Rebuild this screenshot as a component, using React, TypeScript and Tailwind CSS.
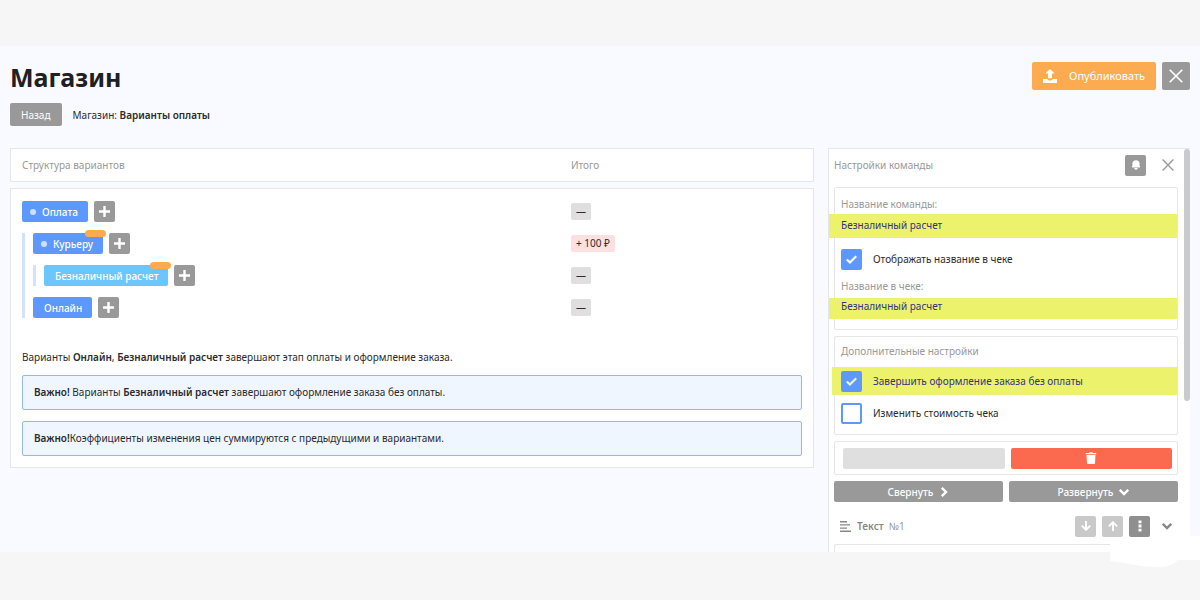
import React from "react";
import { HiBell } from "react-icons/hi";

type Variant = {
  name: string;
  color: string;
  dot?: boolean;
  marked?: boolean;
  children?: Variant[];
};

const variants: Variant[] = [
  { name: "Курьеру", color: "bg-[#5c98fd]", dot: true, marked: true, children: [
    { name: "Безналичный расчет", color: "bg-[#6dc5fe]", marked: true },
  ] },
  { name: "Онлайн", color: "bg-[#5c98fd]" },
];

const totals = ["—", "+ 100 ₽", "—", "—"];

function classNames(...classes: (string | false | undefined)[]) {
  return classes.filter(Boolean).join(" ");
}

const CloseIcon = ({ className }: { className: string }) => (
  <svg viewBox="0 0 14 14" className={className} fill="none" stroke="currentColor" strokeWidth="1.6" aria-hidden="true">
    <path d="M.7.7 13.3 13.3M13.3.7.7 13.3" />
  </svg>
);

const UploadIcon = () => (
  <svg viewBox="0 0 14 14" className="h-3.5 w-3.5" fill="currentColor" aria-hidden="true">
    <path d="M7 0 11.6 4.6H8.9V9.3H5.1V4.6H2.4Z" />
    <path d="M0 10h4.2c.3.9 1.4 1.5 2.8 1.5S9.5 10.9 9.8 10H14v4H0Z" />
  </svg>
);

const TrashIcon = () => (
  <svg viewBox="0 0 12 12" className="h-3 w-3" fill="currentColor" aria-hidden="true">
    <path d="M.8 1H4l.6-.8h2.8l.6.8h3.200v1.200H.8Z" />
    <path d="M1.500 3h9l-.5 8.200c0 .5-.4.8-.8.8H2.800c-.4 0-.8-.3-.8-.8Z" />
  </svg>
);

const ChevronIcon = ({ className }: { className?: string }) => (
  <svg viewBox="0 0 10 10" className={classNames("h-2.5 w-2.5", className)} fill="none" stroke="currentColor" strokeWidth="2.4" aria-hidden="true">
    <path d="M.8 2.800 5 7 9.200 2.800" />
  </svg>
);

const ArrowIcon = ({ className }: { className?: string }) => (
  <svg viewBox="0 0 10 10" className={classNames("h-2.5 w-2.5", className)} fill="none" stroke="currentColor" strokeWidth="1.9" aria-hidden="true">
    <path d="M5 0V9M.8 4.600 5 8.800 9.200 4.600" />
  </svg>
);

const DotsIcon = () => (
  <svg viewBox="0 0 4 12" className="h-3 w-1" fill="currentColor" aria-hidden="true">
    <path d="M.5.5h3v2.800h-3ZM.5 4.600h3v2.800h-3ZM.5 8.700h3v2.800h-3Z" />
  </svg>
);

const LinesIcon = () => (
  <svg viewBox="0 0 11 11" className="h-[11px] w-[11px]" fill="#888" aria-hidden="true">
    <path d="M0 0h7v1.400H0ZM0 3.200h10v1.400H0ZM0 6.400h7v1.400H0ZM0 9.600h11V11H0Z" />
  </svg>
);

const AddButton = () => (
  <button type="button" aria-label="Добавить" className="flex h-[21px] w-[21px] items-center justify-center rounded-xs bg-[#999] text-white">
    <svg viewBox="0 0 11 11" className="h-[11px] w-[11px]" fill="currentColor" aria-hidden="true">
      <path d="M4.300 0h2.400v4.300H11v2.400H6.700V11H4.300V6.700H0V4.300h4.300Z" />
    </svg>
  </button>
);

const VariantRow = ({ variant }: { variant: Variant }) => (
  <div className="flex gap-1.5">
    <button
      type="button"
      className={classNames(
        "relative flex h-[21px] items-center rounded-xs pr-2.5 font-medium text-white",
        variant.dot ? "gap-1.5 pl-2" : "pl-[11px]",
        variant.color
      )}
    >
      {variant.dot && <span className="h-1.5 w-1.5 rounded-full bg-[#cfe0ff]" />}
      {variant.name}
      {variant.marked && <span className="absolute -top-[3px] -right-[3px] h-[7px] w-[21px] rounded-full bg-[#fdab51]" />}
    </button>
    <AddButton />
  </div>
);

const VariantTree = ({ items }: { items: Variant[] }) => (
  <ul className="flex flex-col gap-[11px] border-l-[3px] border-[#d2e1fc] pl-2">
    {items.map((item) => (
      <li key={item.name} className="flex flex-col gap-[11px]">
        <VariantRow variant={item} />
        {item.children && <VariantTree items={item.children} />}
      </li>
    ))}
  </ul>
);

const Checkbox = ({ label, checked, highlighted }: { label: string; checked?: boolean; highlighted?: boolean }) => (
  <label
    className={classNames(
      "flex items-center gap-[11px]",
      highlighted ? "-mr-1.5 -ml-[9px] h-7 bg-[#edf26d] pl-[9px] text-[#33337f]" : "h-[22px]"
    )}
  >
    <span className="relative h-[21px] w-[21px]">
      <input
        type="checkbox"
        defaultChecked={checked}
        className="peer block h-full w-full appearance-none rounded-xs border-2 border-[#5c98fd] bg-white checked:bg-[#5c98fd]"
      />
      <svg viewBox="0 0 12 9" className="pointer-events-none absolute top-1.5 left-[5px] hidden h-[9px] w-[11px] peer-checked:block" fill="none" stroke={highlighted ? "#edf5c0" : "#fff"} strokeWidth="2.4" aria-hidden="true">
        <path d="M.8 4.500 4.300 7.700 11.200.9" />
      </svg>
    </span>
    {label}
  </label>
);

const Structure = () => (
  <section className="flex min-w-0 flex-[804] flex-col gap-1.5">
    <div className="grid h-[34px] grid-cols-[549fr_231fr] items-center border border-[#e3e6ec] bg-white px-[11px] text-[#999]">
      <h2>Структура вариантов</h2>
      <h2>Итого</h2>
    </div>
    <div className="border border-[#e3e6ec] bg-white px-[11px] pt-3 pb-[11px]">
      <div className="grid grid-cols-[549fr_231fr]">
        <div className="flex flex-col gap-[11px]">
          <VariantRow variant={{ name: "Оплата", color: "bg-[#5c98fd]", dot: true }} />
          <VariantTree items={variants} />
        </div>
        <ul className="flex flex-col gap-[11px]">
          {totals.map((total, i) => (
            <li key={i} className="flex h-[21px] items-center">
              <span className={classNames("h-[17px] rounded-xs px-[5px] leading-4", total === "—" ? "bg-[#dfdfdf]" : "bg-[#fee0e0]")}>
                {total}
              </span>
            </li>
          ))}
        </ul>
      </div>
      <p className="mt-[31px] mb-2.5">
        Варианты <b className="font-semibold">Онлайн</b>, <b className="font-semibold">Безналичный расчет</b> завершают этап оплаты и оформление заказа.
      </p>
      <div className="flex flex-col gap-[11px]">
        <p className="h-[35px] rounded-xs border border-[#94b7ee] bg-[#f0f6ff] px-[11px] py-2">
          <b className="font-semibold">Важно!</b> Варианты <b className="font-semibold">Безналичный расчет</b> завершают оформление заказа без оплаты.
        </p>
        <p className="h-[35px] rounded-xs border border-[#94b7ee] bg-[#f0f6ff] px-[11px] py-2">
          <b className="font-semibold">Важно!</b>Коэффициенты изменения цен суммируются с предыдущими и вариантами.
        </p>
      </div>
    </div>
  </section>
);

const Settings = () => (
  <aside className="flex min-w-0 flex-1 overflow-hidden border-t border-l border-[#e3e6ec] bg-white">
    <div className="flex min-w-0 flex-1 flex-col gap-1.5 pr-1.5 pl-[5px]">
      <header className="flex h-8 shrink-0 items-center text-[#999]">
        <h2 className="flex-1">Настройки команды</h2>
        <button type="button" aria-label="Уведомления" className="mr-4 flex h-[21px] w-[21px] items-center justify-center rounded-xs bg-[#999] text-white">
          <HiBell className="h-3 w-3" />
        </button>
        <button type="button" aria-label="Закрыть настройки" className="mr-1">
          <CloseIcon className="h-3 w-3" />
        </button>
      </header>
      <div className="h-[143px] shrink-0 rounded-xs border border-[#e6e6e6] px-1.5 pt-2">
        <label htmlFor="command-name" className="block h-[18px] text-[#999]">Название команды:</label>
        <div className="-mr-1.5 -ml-3 flex h-6 bg-[#edf26d] pl-3">
          <input id="command-name" defaultValue="Безналичный расчет" className="h-[22px] w-full text-[#33337f] outline-none" />
        </div>
        <div className="mt-2.5">
          <Checkbox label="Отображать название в чеке" checked />
        </div>
        <label htmlFor="receipt-name" className="mt-2 block h-5 text-[#999]">Название в чеке:</label>
        <div className="-mr-1.5 -ml-3 flex h-[21px] bg-[#edf26d] pl-3">
          <input id="receipt-name" defaultValue="Безналичный расчет" className="h-4 w-full text-[#33337f] outline-none" />
        </div>
      </div>
      <div className="h-[99px] shrink-0 rounded-xs border border-[#e6e6e6] px-1.5 pt-1.5">
        <h3 className="h-6 text-[#999]">Дополнительные настройки</h3>
        <Checkbox label="Завершить оформление заказа без оплаты" checked highlighted />
        <div className="mt-[7px]">
          <Checkbox label="Изменить стоимость чека" />
        </div>
      </div>
      <div className="flex h-[34px] shrink-0 items-center gap-1.5 rounded-xs border border-[#e6e6e6] pr-[5px] pl-2">
        <button type="button" aria-label="Сохранить" disabled className="h-[21px] flex-1 rounded-xs bg-[#dfdfdf]" />
        <button type="button" aria-label="Удалить" className="flex h-[21px] flex-1 items-center justify-center rounded-xs bg-[#fb6a4f] text-white">
          <TrashIcon />
        </button>
      </div>
      <div className="flex shrink-0 gap-1.5 font-medium text-white">
        <button type="button" className="flex h-[21px] flex-1 items-center justify-center gap-1.5 rounded-xs bg-[#999]">
          Свернуть <ChevronIcon className="-rotate-90" />
        </button>
        <button type="button" className="flex h-[21px] flex-1 items-center justify-center gap-1.5 rounded-xs bg-[#999]">
          Развернуть <ChevronIcon />
        </button>
      </div>
      <div className="flex h-[30px] shrink-0 items-center gap-1.5 pt-1.5 pr-1.5 pl-1.5 text-[#999]">
        <LinesIcon />
        <p className="flex-1">
          <b className="font-semibold text-[#888]">Текст</b>&nbsp; №1
        </p>
        <button type="button" aria-label="Вниз" className="flex h-[21px] w-[21px] items-center justify-center rounded-xs bg-[#c9c9c9] text-white">
          <ArrowIcon />
        </button>
        <button type="button" aria-label="Вверх" className="flex h-[21px] w-[21px] items-center justify-center rounded-xs bg-[#c9c9c9] text-white">
          <ArrowIcon className="rotate-180" />
        </button>
        <button type="button" aria-label="Меню" className="flex h-[21px] w-[21px] items-center justify-center rounded-xs bg-[#8f8f8f] text-white">
          <DotsIcon />
        </button>
        <button type="button" aria-label="Раскрыть" className="ml-1.5 text-[#888]">
          <ChevronIcon />
        </button>
      </div>
      <div className="h-8 shrink-0 rounded-xs border border-[#e6e6e6]" />
    </div>
    <div className="w-1.5 bg-white">
      <div className="h-[252px] rounded-full bg-[#c9cacd]" />
    </div>
  </aside>
);

export default function App() {
  return (
    <div className="relative flex h-screen flex-col overflow-hidden bg-[#f6f6f6] pt-[46px] pb-12 font-['Noto_Sans','Open_Sans',sans-serif] text-[10px] leading-4 text-[#2b2b2b]">
      <main className="flex min-h-0 flex-1 flex-col bg-[#f9faff] px-2.5">
        <header className="flex items-start gap-1.5 pt-4">
          <h1 className="flex-1 text-[25px] leading-[30px] font-bold text-[#1f2021]">Магазин</h1>
          <button type="button" className="flex h-7 items-center gap-3 rounded-xs bg-[#fdab51] px-[11px] text-[11px] text-white">
            <UploadIcon />
            Опубликовать
          </button>
          <button type="button" aria-label="Закрыть" className="flex h-7 w-7 items-center justify-center rounded-xs bg-[#999] text-white">
            <CloseIcon className="h-3.5 w-3.5" />
          </button>
        </header>
        <nav className="mt-[11px] mb-[22px] flex items-center gap-[11px]">
          <button type="button" className="h-[23px] rounded-xs bg-[#999] px-[11px] text-white">Назад</button>
          <p>Магазин: <b className="font-semibold">Варианты оплаты</b></p>
        </nav>
        <div className="flex min-h-0 flex-1 items-start gap-3.5">
          <Structure />
          <div className="flex h-full min-w-0 flex-[362]">
            <Settings />
          </div>
        </div>
      </main>
      <svg viewBox="0 0 90 32" className="pointer-events-none absolute right-0 bottom-8 h-8 w-[90px]" fill="#fff" aria-hidden="true">
        <path d="M0 7H44L60 3 80 0H90V24H68Q62 31 50 31 32 31 20 28 10 26 0 25Z" />
      </svg>
    </div>
  );
}
